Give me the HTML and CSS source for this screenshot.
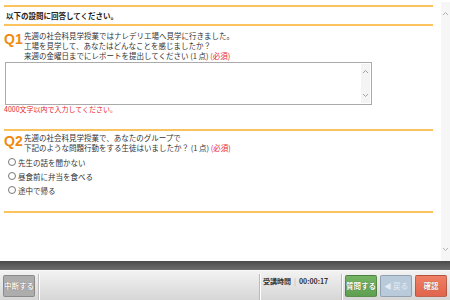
FILE: index.html
```html
<!DOCTYPE html>
<html lang="ja">
<head>
  <meta charset="UTF-8" />
  <title>設問</title>
  <link rel="stylesheet" href="styles.css">
</head>
<body>
  <div class="main">
    <div class="content">
      <div class="intro">以下の設問に回答してください。</div>

      <div class="question">
        <div class="qhead">
          <span class="qno">Q1</span>
          <div class="qtext">
            先週の社会科見学授業ではナレデリエ場へ見学に行きました。<br>
            工場を見学して、あなたはどんなことを感じましたか？<br>
            来週の金曜日までにレポートを提出してください (1 点) <span class="req">(必須)</span>
          </div>
        </div>
        <div class="answer">
          <div class="arrows">
            <svg width="7" height="5" viewBox="0 0 7 5"><path d="M1 4 L3.5 1.5 L6 4" fill="none" stroke="#999" stroke-width="0.9"/></svg>
            <svg width="7" height="5" viewBox="0 0 7 5"><path d="M1 1 L3.5 3.5 L6 1" fill="none" stroke="#999" stroke-width="0.9"/></svg>
          </div>
        </div>
        <div class="note">4000文字以内で入力してください。</div>
      </div>

      <div class="question q2">
        <div class="qhead">
          <span class="qno">Q2</span>
          <div class="qtext">
            先週の社会科見学授業で、あなたのグループで<br>
            下記のような問題行動をする生徒はいましたか？ (1 点) <span class="req">(必須)</span>
          </div>
        </div>
        <ul class="choices">
          <li><span class="radio"></span>先生の話を聞かない</li>
          <li><span class="radio"></span>昼食前に弁当を食べる</li>
          <li><span class="radio"></span>途中で帰る</li>
        </ul>
      </div>
    </div>
    <div class="scrollbar">
      <svg width="7" height="5" viewBox="0 0 7 5"><path d="M1 4 L3.5 1.5 L6 4" fill="none" stroke="#aaa" stroke-width="0.9"/></svg>
      <svg width="7" height="5" viewBox="0 0 7 5"><path d="M1 1 L3.5 3.5 L6 1" fill="none" stroke="#aaa" stroke-width="0.9"/></svg>
    </div>
  </div>

  <div class="darkbar"></div>

  <div class="toolbar">
    <button class="btn grey">中断する</button>
    <div class="sep"></div>
    <div class="spacer"></div>
    <div class="sep"></div>
    <div class="timer"><b>受講時間</b><i>|</i><b>00:00:17</b></div>
    <div class="sep"></div>
    <button class="btn green">質問する</button>
    <button class="btn blue">&#9664; 戻る</button>
    <button class="btn red">確認</button>
  </div>
</body>
</html>
```

FILE: styles.css
```css
body {
  margin: 0;
  font-family: "Noto Sans CJK JP", "Liberation Sans", sans-serif;
  font-size: 7.5px;
  color: #333;
  background: #fff;
  width: 450px;
  height: 300px;
  overflow: hidden;
}
.main {
  display: flex;
  height: 261px;
}
.content {
  width: 433px;
  padding: 5px 0 0 4px;
}
.intro {
  border-top: 2px solid #fcc25c;
  border-bottom: 2px solid #fcc25c;
  font-weight: bold;
  color: #222;
  padding: 3px 2px 0;
  box-sizing: border-box;
  height: 21px;
  line-height: 12px;
}
.question {
  padding-top: 5px;
}
.q2 {
  margin-top: 16px;
  padding-top: 2px;
  border-top: 2px solid #fcc25c;
  border-bottom: 2px solid #fcc25c;
  padding-bottom: 14px;
}
.qhead {
  display: flex;
  align-items: flex-start;
}
.qno {
  font-family: "Liberation Sans", sans-serif;
  font-weight: bold;
  font-size: 14px;
  color: #f08a0c;
  width: 20px;
  margin-top: 1px;
  line-height: 14px;
}
.qtext {
  line-height: 10px;
  color: #333;
}
.req {
  color: #e8262f;
}
.answer {
  margin: 1px 0 0 1px;
  width: 365px;
  height: 41px;
  border: 1px solid #aaa;
  display: flex;
  justify-content: flex-end;
}
.arrows {
  width: 9px;
  background: #f4f4f4;
  margin: 1px;
  display: flex;
  flex-direction: column;
  justify-content: space-between;
  align-items: center;
  padding: 5px 0;
}
.note {
  color: #e8262f;
  font-size: 7px;
  margin-top: 0;
  line-height: 8px;
}
.choices {
  list-style: none;
  margin: 2px 0 0 4px;
  padding: 0;
}
.choices li {
  display: flex;
  align-items: center;
  height: 14px;
}
.radio {
  width: 6px;
  height: 6px;
  border: 1px solid #777;
  border-radius: 50%;
  margin-right: 2px;
  background: #fff;
}
.scrollbar {
  width: 9px;
  margin: 2px 0 0 8px;
  background: #f6f6f6;
  display: flex;
  flex-direction: column;
  justify-content: space-between;
  align-items: center;
  padding: 9px 0 9px;
}
.darkbar {
  height: 9px;
  background: linear-gradient(#4a4a4a, #6e6e6e);
}
.toolbar {
  height: 30px;
  box-sizing: border-box;
  border-top: 1px solid #fafafa;
  background: linear-gradient(#f2f2f2, #d6d6d6);
  display: flex;
  align-items: center;
  padding: 0 3px;
  gap: 3px;
}
.sep {
  width: 1px;
  align-self: stretch;
  margin-top: 3px;
  background: #bbb;
  box-shadow: 1px 0 0 #fff;
}
.spacer {
  flex: 1;
}
.timer {
  align-self: flex-start;
  margin-top: 5px;
  font-size: 7px;
  color: #333;
  display: flex;
  gap: 3px;
  width: 75px;
}
.timer i {
  font-style: normal;
  color: #aaa;
}
.btn {
  font-family: "Noto Sans CJK JP", sans-serif;
  font-size: 7.5px;
  font-weight: bold;
  width: 32px;
  height: 22px;
  padding: 0;
  border: 1px solid rgba(0,0,0,0.2);
  border-radius: 2px;
  color: #fff;
  text-shadow: 0 0 1px rgba(0,0,0,0.5);
}
.grey {
  background: #adadad;
  color: #f4f4f4;
}
.green {
  background: linear-gradient(#74b464, #5e9f52);
}
.blue {
  background: #b9cbdb;
  color: #e4ecf3;
  text-shadow: none;
  font-weight: normal;
}
.red {
  background: linear-gradient(#ef7f66, #e0654c);
}
```
